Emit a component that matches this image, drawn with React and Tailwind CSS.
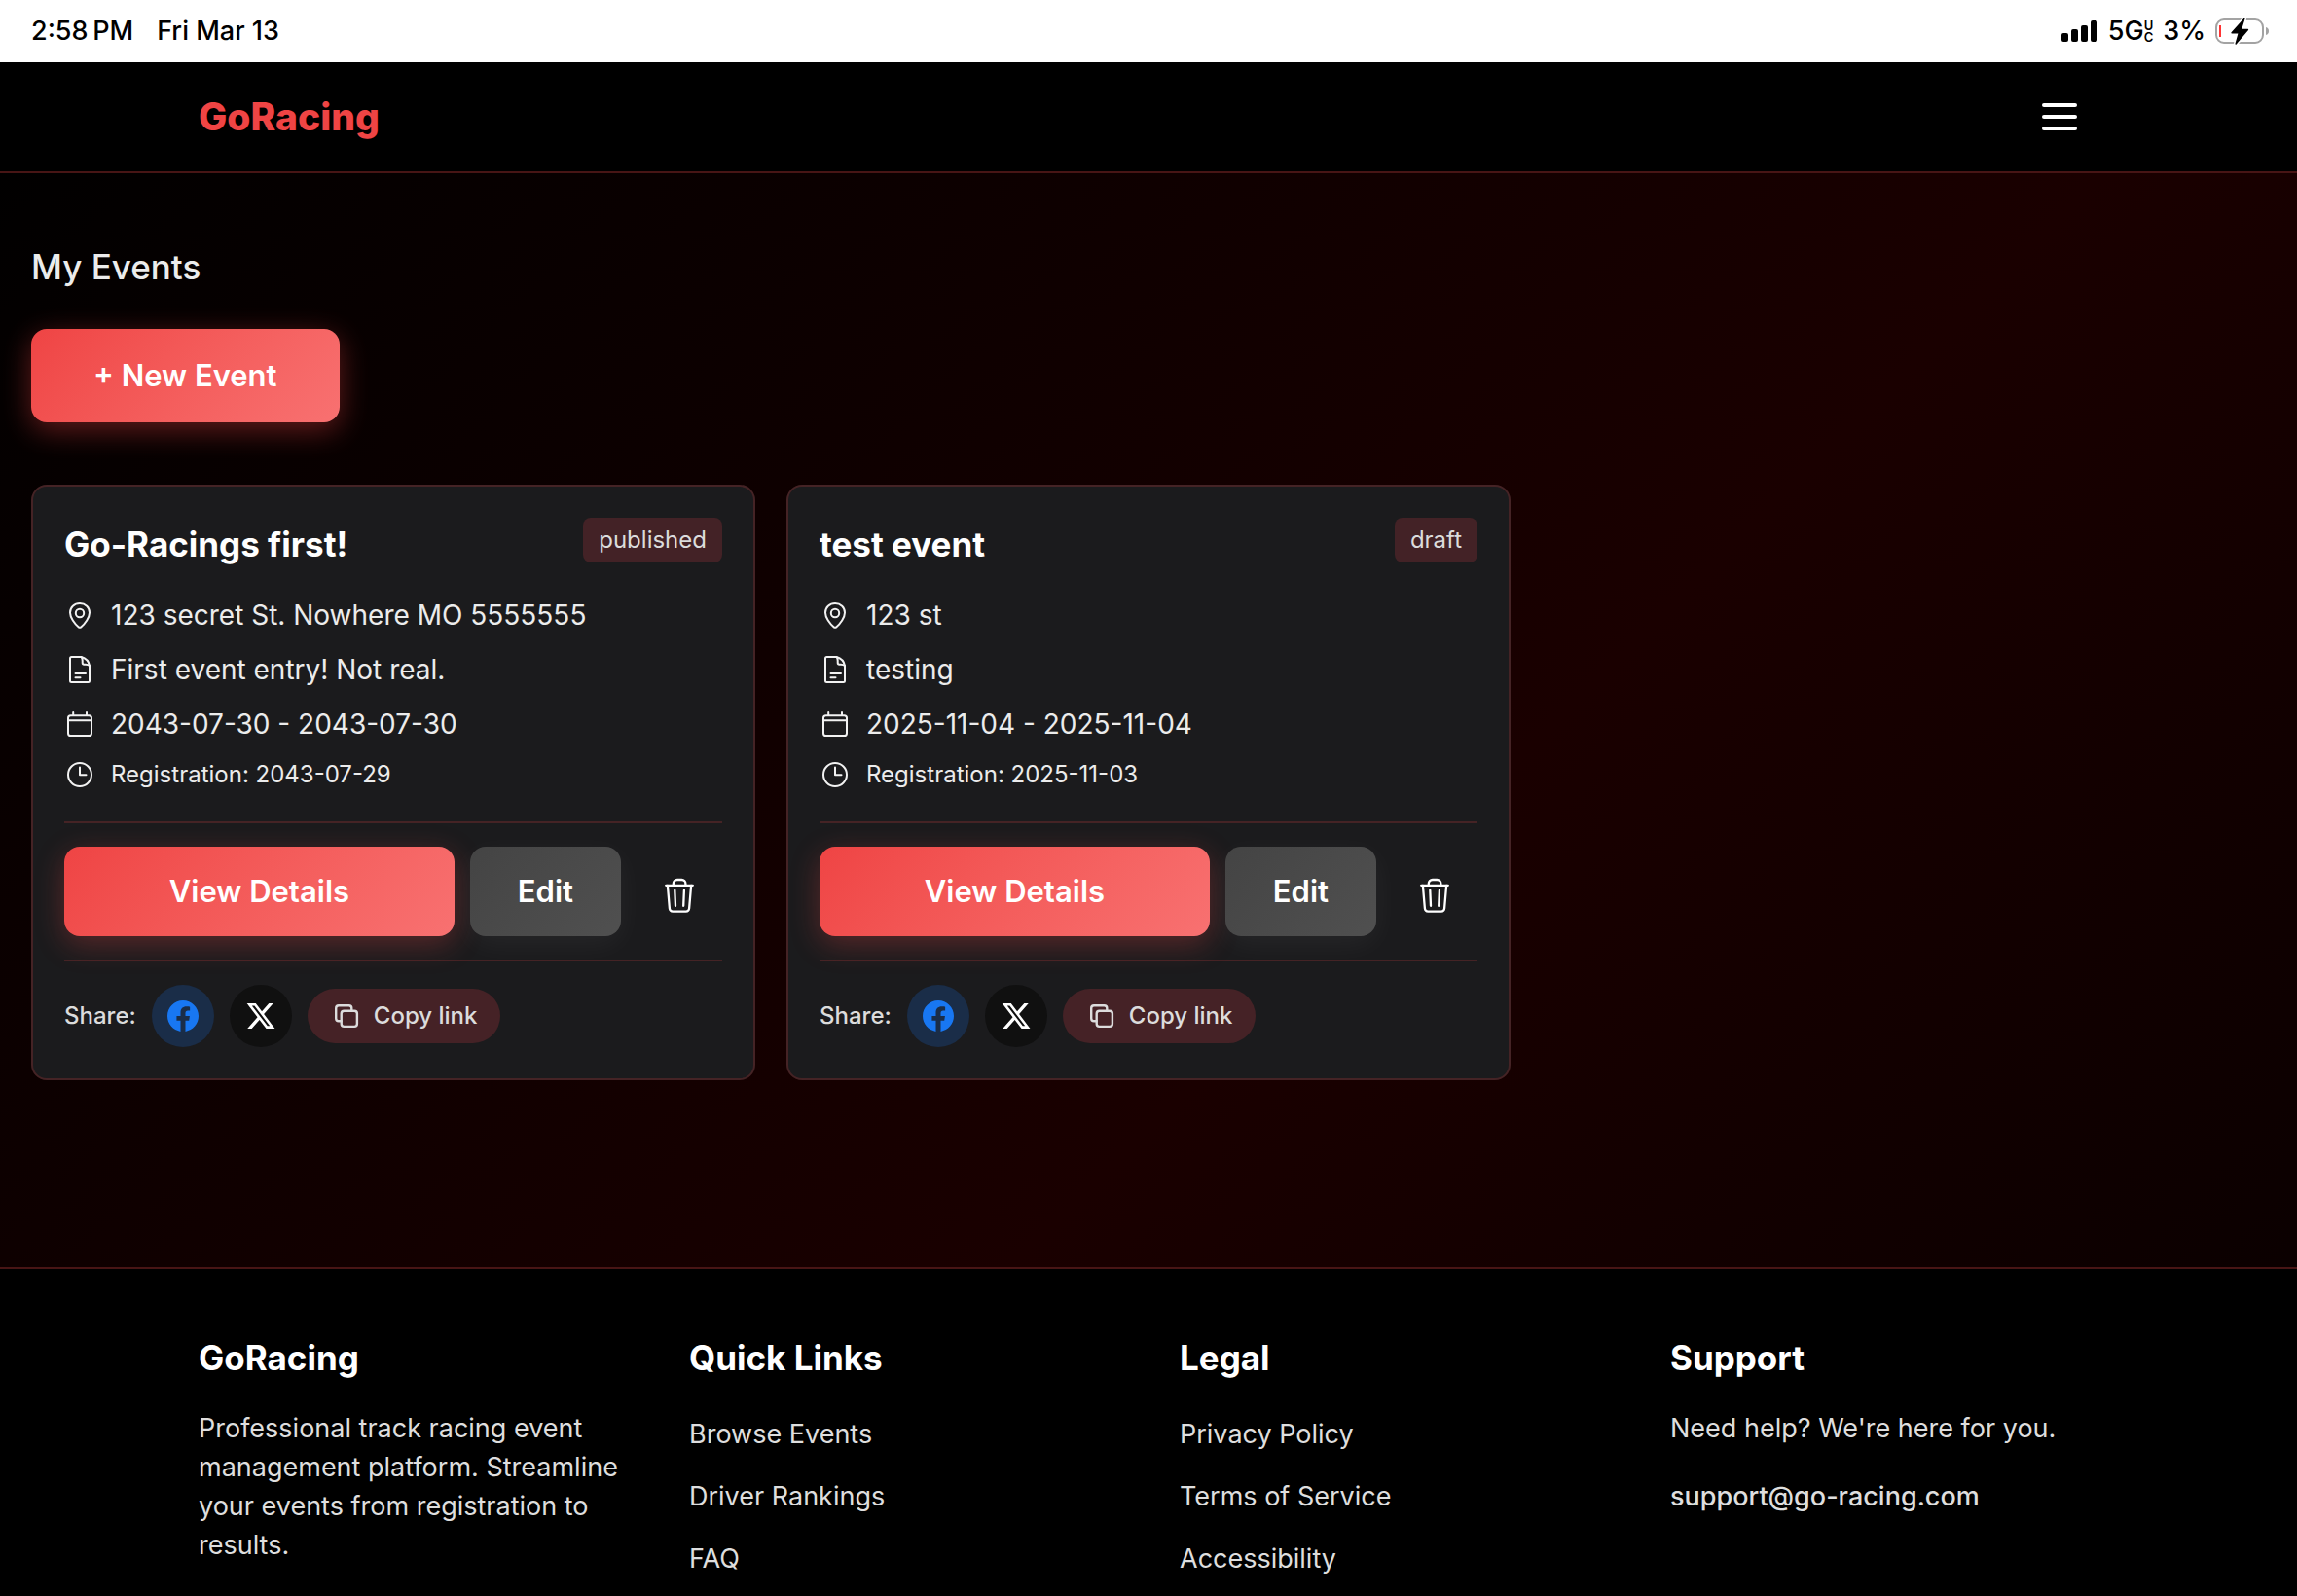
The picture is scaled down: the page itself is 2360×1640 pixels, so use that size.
const events = [
  {
    title: "Go-Racings first!",
    status: "published",
    location: "123 secret St. Nowhere MO 5555555",
    description: "First event entry! Not real.",
    dates: "2043-07-30 - 2043-07-30",
    registration: "Registration: 2043-07-29",
  },
  {
    title: "test event",
    status: "draft",
    location: "123 st",
    description: "testing",
    dates: "2025-11-04 - 2025-11-04",
    registration: "Registration: 2025-11-03",
  },
];

function LineIcon({ children }) {
  return (
    <svg
      viewBox="0 0 32 32"
      className="size-8 shrink-0 text-[#f2f2f2]"
      fill="none"
      stroke="currentColor"
      strokeWidth="2"
      strokeLinecap="round"
      strokeLinejoin="round"
      aria-hidden="true"
    >
      {children}
    </svg>
  );
}

function PinIcon() {
  return (
    <LineIcon>
      <path d="M16 4C10.3 4 6 8 6 13.500c0 5 4.600 11.300 8.600 14.700a2.100 2.100 0 0 0 2.800 0C21.400 24.800 26 18.500 26 13.500 26 8 21.700 4 16 4z" />
      <circle cx="16" cy="14" r="4.200" />
    </LineIcon>
  );
}

function DocumentIcon() {
  return (
    <LineIcon>
      <path d="M7.500 3H17.500c4.500 1.300 7.700 4.600 8.500 9v15.500a1.500 1.500 0 0 1-1.500 1.500h-17A1.500 1.500 0 0 1 6 27.500v-23A1.500 1.500 0 0 1 7.500 3z" />
      <path d="M17.500 3c.9 1.200 1.200 2.500 1.200 4v2c0 1.100.6 1.700 1.700 1.700H22c1.600 0 3 .4 4 1.300" />
      <path d="M11.500 20h10.500M11.500 24.200h5" />
    </LineIcon>
  );
}

function CalendarIcon() {
  return (
    <LineIcon>
      <rect x="4" y="7.200" width="24" height="20.800" rx="2.600" />
      <path d="M4 12.200h24M9.200 4v3M23 4v3" />
    </LineIcon>
  );
}

function ClockIcon() {
  return (
    <LineIcon>
      <circle cx="16" cy="16" r="12" />
      <path d="M16 8.500V16.200h6.500" />
    </LineIcon>
  );
}

function TrashIcon() {
  return (
    <svg
      viewBox="0 0 40 40"
      className="size-10"
      fill="none"
      stroke="currentColor"
      strokeWidth="2.300"
      strokeLinecap="round"
      strokeLinejoin="round"
      aria-hidden="true"
    >
      <path d="M6.200 9.800h27.600M13.800 9.500V8a4 4 0 0 1 4-4h4.600a4 4 0 0 1 4 4v1.500" />
      <path d="M7.900 10l2 23.500a3.400 3.400 0 0 0 3.400 3.100h13.400a3.400 3.400 0 0 0 3.400-3.100l2-23.500" />
      <path d="M15.300 14.800l.7 16M24.900 14.800l-.7 16" />
    </svg>
  );
}

function FacebookIcon() {
  return (
    <svg viewBox="0 0 24 24" className="size-8" fill="#1877f2" aria-hidden="true">
      <path d="M24 12.073c0-6.627-5.373-12-12-12s-12 5.373-12 12c0 5.990 4.388 10.954 10.125 11.854v-8.385H7.078v-3.470h3.047V9.430c0-3.007 1.792-4.669 4.533-4.669 1.312 0 2.686.235 2.686.235v2.953H15.830c-1.491 0-1.956.925-1.956 1.874v2.250h3.328l-.532 3.470h-2.796v8.385C19.612 23.027 24 18.062 24 12.073z" />
    </svg>
  );
}

function XIcon() {
  return (
    <svg viewBox="0 0 24 24" className="size-8" fill="#ffffff" aria-hidden="true">
      <path d="M18.244 2.250h3.308l-7.227 8.260 8.502 11.240H16.170l-5.214-6.817L4.990 21.750H1.680l7.730-8.835L1.254 2.250H8.080l4.713 6.231zm-1.161 17.520h1.833L7.084 4.126H5.117z" />
    </svg>
  );
}

function CopyIcon() {
  return (
    <svg
      viewBox="0 0 32 32"
      className="size-8"
      fill="none"
      stroke="currentColor"
      strokeWidth="2.400"
      strokeLinecap="round"
      strokeLinejoin="round"
      aria-hidden="true"
    >
      <rect x="10.700" y="10.700" width="16.200" height="16.200" rx="2.800" />
      <path d="M21.300 10.500V8a2.800 2.800 0 0 0-2.800-2.800H8A2.800 2.800 0 0 0 5.200 8v10.500A2.800 2.800 0 0 0 8 21.300h2.500" />
    </svg>
  );
}

function SignalIcon() {
  return (
    <svg viewBox="0 0 38 24" className="h-6 w-[38px]" fill="#000" aria-hidden="true">
      <rect x="0" y="14" width="7" height="9" rx="2" />
      <rect x="10" y="10" width="7" height="13" rx="2" />
      <rect x="20" y="6" width="7" height="17" rx="2" />
      <rect x="30" y="1" width="7" height="22" rx="2" />
    </svg>
  );
}

function BatteryIcon() {
  return (
    <svg viewBox="0 0 56 28" className="h-7 w-14" aria-hidden="true">
      <rect x="1" y="2" width="48" height="24" rx="8" fill="none" stroke="#a3a3a3" strokeWidth="2" />
      <path d="M52 10c2 .5 3 2 3 4s-1 3.500-3 4z" fill="#a3a3a3" />
      <path
        d="M29.500.8 16.500 15.200c-.4.5-.1 1.200.5 1.200h6.400L20.500 26.700c-.3 1 .5 1.400 1.200.7L34 13c.4-.5.100-1.200-.5-1.200h-6.200L30.500 1.500c.3-1-.4-1.300-1-.7z"
        fill="#000"
        stroke="#fff"
        strokeWidth="3"
        paintOrder="stroke"
      />
      <rect x="4" y="8" width="2" height="12" fill="#ff3333" />
    </svg>
  );
}

function StatusBar() {
  return (
    <div className="flex h-16 items-center justify-between bg-white pr-7 pl-8 text-[27px] leading-8 font-medium text-black">
      <div className="flex gap-6">
        <span>2:58&#8201;PM</span>
        <span>Fri Mar 13</span>
      </div>
      <div className="flex items-center gap-2.5">
        <SignalIcon />
        <span className="flex items-center">
          5G
          <span className="flex flex-col text-center text-[13px] leading-[12px] font-semibold">
            <span>U</span>
            <span>C</span>
          </span>
        </span>
        <span>3%</span>
        <BatteryIcon />
      </div>
    </div>
  );
}

function NavBar() {
  return (
    <header className="border-b-2 border-[#ef4444]/30 bg-black">
      <div className="mx-auto flex h-28 max-w-[2000px] items-center justify-between px-6">
        <a href="#home" className="text-[39px] leading-[56px] font-extrabold text-[#ef4444]">
          GoRacing
        </a>
        <button type="button" aria-label="Open menu" className="flex flex-col gap-2 px-[22px] py-3">
          <span className="h-1 w-9 rounded-xs bg-white" />
          <span className="h-1 w-9 rounded-xs bg-white" />
          <span className="h-1 w-9 rounded-xs bg-white" />
        </button>
      </div>
    </header>
  );
}

function EventCard({ event }) {
  return (
    <article className="rounded-2xl border-2 border-[#452325] bg-[#1b1b1d] p-8">
      <div className="flex items-start justify-between">
        <h2 className="text-[35px] leading-[54px] font-bold text-white">{event.title}</h2>
        <span className="rounded-lg bg-[#432226] px-4 text-[24px] leading-[46px] text-[#dcdcdc]">
          {event.status}
        </span>
      </div>
      <ul className="mt-[26px] flex flex-col gap-4 text-[28px] leading-10 text-[#ececec]">
        <li className="flex items-center gap-4">
          <PinIcon />
          {event.location}
        </li>
        <li className="flex items-center gap-4">
          <DocumentIcon />
          {event.description}
        </li>
        <li className="flex items-center gap-4">
          <CalendarIcon />
          {event.dates}
        </li>
        <li className="flex items-center gap-4 text-[24px] leading-8">
          <ClockIcon />
          {event.registration}
        </li>
      </ul>
      <div className="mt-8 flex gap-4 border-t-2 border-[#452325] py-6 text-[31px] leading-[92px] font-semibold text-white">
        <button
          type="button"
          className="flex-1 rounded-2xl bg-linear-135 from-[#ef4444] to-[#f87171] shadow-[0_8px_30px_rgba(239,68,68,0.3)]"
        >
          View Details
        </button>
        <button
          type="button"
          className="rounded-2xl bg-linear-135 from-[#444444] to-[#505050] px-[49px] shadow-[0_8px_30px_rgba(255,255,255,0.05)]"
        >
          Edit
        </button>
        <button type="button" aria-label="Delete event" className="flex items-center px-6 pt-2">
          <TrashIcon />
        </button>
      </div>
      <div className="flex items-center gap-4 border-t-2 border-[#452325] pt-6 text-[24px] text-[#dcdcdc]">
        <span className="font-medium">Share:</span>
        <button
          type="button"
          aria-label="Share on Facebook"
          className="flex size-16 items-center justify-center rounded-full bg-[#1a2d48]"
        >
          <FacebookIcon />
        </button>
        <button
          type="button"
          aria-label="Share on X"
          className="flex size-16 items-center justify-center rounded-full bg-[#101010]"
        >
          <XIcon />
        </button>
        <button
          type="button"
          className="flex h-14 items-center gap-3 rounded-full bg-[#452226] px-6 font-medium"
        >
          <CopyIcon />
          Copy link
        </button>
      </div>
    </article>
  );
}

function FooterLinks({ title, links }) {
  return (
    <nav aria-label={title}>
      <h3 className="text-[35px] leading-[54px] font-bold text-white">{title}</h3>
      <ul className="mt-[26px] flex flex-col gap-3">
        {links.map((link) => (
          <li key={link} className="leading-[52px]">
            <a href="#link">{link}</a>
          </li>
        ))}
      </ul>
    </nav>
  );
}

function Footer() {
  return (
    <footer className="flex-1 border-t-2 border-[#ef4444]/30 bg-black text-[27px] leading-10 text-[#dedede]">
      <div className="mx-auto grid max-w-[2000px] grid-cols-4 gap-16 px-6 pt-16">
        <section>
          <h3 className="text-[35px] leading-[54px] font-bold text-white">GoRacing</h3>
          <p className="mt-[26px]">
            Professional track racing event management platform. Streamline your events from
            registration to results.
          </p>
        </section>
        <FooterLinks title="Quick Links" links={["Browse Events", "Driver Rankings", "FAQ"]} />
        <FooterLinks title="Legal" links={["Privacy Policy", "Terms of Service", "Accessibility"]} />
        <section>
          <h3 className="text-[35px] leading-[54px] font-bold text-white">Support</h3>
          <p className="mt-[26px]">Need help? We're here for you.</p>
          <a
            href="mailto:support@go-racing.com"
            className="mt-6 inline-block leading-[52px] font-medium"
          >
            support@go-racing.com
          </a>
        </section>
      </div>
    </footer>
  );
}

export default function App() {
  return (
    <div className="flex min-h-screen flex-col bg-black font-['Inter','Liberation_Sans',sans-serif]">
      <StatusBar />
      <NavBar />
      <main className="bg-[linear-gradient(135deg,#000000_-3%,#1a0000_62%,#000000_127%)] px-8 pt-17 pb-48">
        <h1 className="text-[35px] leading-[56px] font-medium text-[#ececec]">My Events</h1>
        <button
          type="button"
          className="mt-9 rounded-2xl bg-linear-135 from-[#ef4444] to-[#f87171] px-16 text-[31px] leading-[96px] font-semibold text-white shadow-[0_8px_30px_rgba(239,68,68,0.4)]"
        >
          + New Event
        </button>
        <div className="mt-16 grid grid-cols-3 gap-8">
          {events.map((event) => (
            <EventCard key={event.title} event={event} />
          ))}
        </div>
      </main>
      <Footer />
    </div>
  );
}
